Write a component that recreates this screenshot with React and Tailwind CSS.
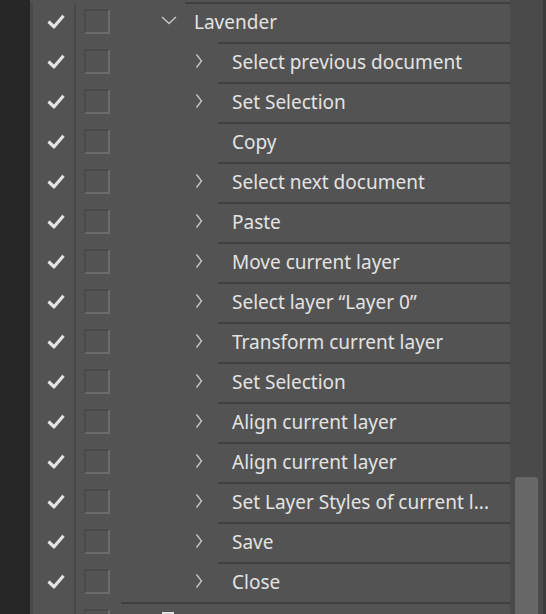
import React from 'react';

const steps = [
  { label: 'Select previous document', expandable: true },
  { label: 'Set Selection', expandable: true },
  { label: 'Copy', expandable: false },
  { label: 'Select next document', expandable: true },
  { label: 'Paste', expandable: true },
  { label: 'Move current layer', expandable: true },
  { label: 'Select layer \u201cLayer 0\u201d', expandable: true },
  { label: 'Transform current layer', expandable: true },
  { label: 'Set Selection', expandable: true },
  { label: 'Align current layer', expandable: true },
  { label: 'Align current layer', expandable: true },
  { label: 'Set Layer Styles of current l...', expandable: true },
  { label: 'Save', expandable: true },
  { label: 'Close', expandable: true },
];

function Check() {
  return (
    <svg width="18" height="15" viewBox="0 0 18 15" fill="none">
      <path d="M1.5 7.5 L7 12.8 L16.5 1.8" stroke="#e4e4e4" strokeWidth="3.2" strokeLinejoin="round" />
    </svg>
  );
}

function ChevronRight() {
  return (
    <svg width="8" height="16" viewBox="0 0 8 16" fill="none">
      <path d="M1.5 1.5 L6.5 8 L1.5 14.5" stroke="#c6c6c6" strokeWidth="1.4" />
    </svg>
  );
}

function ChevronDown() {
  return (
    <svg width="16" height="9" viewBox="0 0 16 9" fill="none">
      <path d="M1 1 L8 7.5 L15 1" stroke="#c6c6c6" strokeWidth="1.4" />
    </svg>
  );
}

function LeftCols() {
  return (
    <>
      <div className="w-[3px] self-stretch bg-[#4a4a4a]" />
      <div className="w-[41px] pl-[14px] pb-[2px] flex items-center">
        <Check />
      </div>
      <div className="w-[2px] self-stretch bg-[#494949]" />
      <div className="w-[34px] pl-[8px] pb-[2px] flex items-center">
        <div className="w-[26px] h-[25px] border-2 border-t-[#4a4a4a] border-l-[#4a4a4a] border-r-[#6b6b6b] border-b-[#6b6b6b]" />
      </div>
    </>
  );
}

function Row({ children }) {
  return <div className="h-[40px] flex">{children}</div>;
}

export default function App() {
  return (
    <div
      className="w-[546px] h-[614px] overflow-hidden flex bg-[#262626] text-[#e3e3e3]"
      style={{ fontFamily: '"Noto Sans", "Open Sans", sans-serif' }}
    >
      <div className="w-[30px] shrink-0" />
      <div className="w-[480px] shrink-0 bg-[#535353] pt-[2px]">
        <Row>
          <LeftCols />
          <div className="w-[42px]" />
          <div className="w-[33px] flex items-center justify-center pb-[4px]">
            <ChevronDown />
          </div>
          <div className="flex-1 min-w-0 border-t-2 border-[#404040] pl-[9px] flex items-center text-[19px] pb-[2px]">
            Lavender
          </div>
        </Row>
        {steps.map((s, i) => (
          <Row key={i}>
            <LeftCols />
            <div className="w-[76px]" />
            <div className="w-[32px] pl-[9px] flex items-center pb-[2px]">
              {s.expandable && <ChevronRight />}
            </div>
            <div className="flex-1 min-w-0 border-t-2 border-[#404040] pl-[14px] pr-[6px] flex items-center text-[19px] pb-[2px]">
              <span className="truncate">{s.label}</span>
            </div>
          </Row>
        ))}
        <Row>
          <LeftCols />
          <div className="w-[11px]" />
          <div className="flex-1 border-t-2 border-[#404040] pl-[41px] pt-[8px]">
            <div className="w-[12px] h-[4px] bg-[#e0e0e0]" />
          </div>
        </Row>
      </div>
      <div className="w-[33px] shrink-0 bg-[#4a4a4a] flex flex-col">
        <div className="h-[477px]" />
        <div className="ml-[5px] w-[23px] flex-1 bg-[#676767] rounded-t-[3px]" />
      </div>
      <div className="w-[3px] shrink-0 bg-[#3b3b3b]" />
    </div>
  );
}
